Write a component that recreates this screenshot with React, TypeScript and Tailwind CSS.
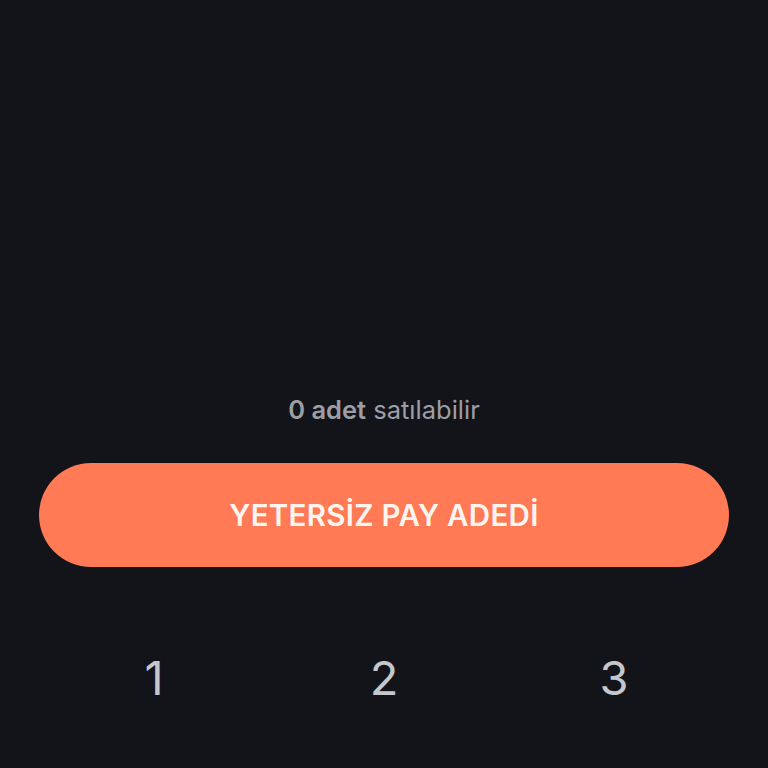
import React from 'react';

export default function App() {
  const keys = ['1', '2', '3'];

  return (
    <div className="h-[768px] w-full overflow-hidden bg-[#131419] px-[39px] font-['Inter',sans-serif] flex flex-col">
      <div className="pt-[394px] h-[426px] text-center text-[25.5px] leading-[32px] text-[#9c9ea5]">
        <span className="font-semibold">0 adet</span> satılabilir
      </div>

      <button className="mt-[37px] h-[104px] w-full rounded-full bg-[#ff7a55] text-[29.5px] font-semibold tracking-[0.3px] text-[#fff5f0]">
        YETERSİZ PAY ADEDİ
      </button>

      <div className="mt-[85px] grid grid-cols-3">
        {keys.map(k => (
          <div key={k} className="text-center text-[47px] leading-[52px] text-[#c5c7cc]">
            {k}
          </div>
        ))}
      </div>
    </div>
  );
}
